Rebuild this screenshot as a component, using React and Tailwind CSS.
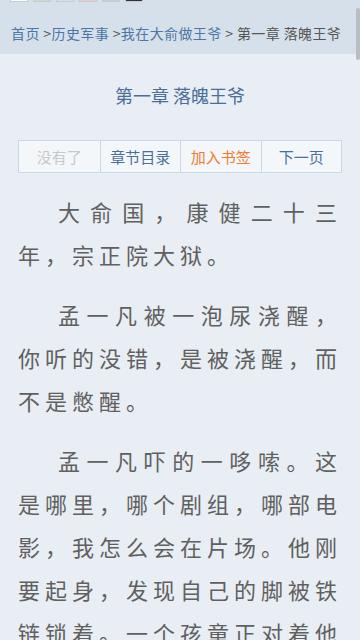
import React from 'react';

const swatches = ['bg-white', 'bg-[#c9dcc4]', 'bg-[#d9dfe3]', 'bg-[#ebcaca]', 'bg-[#cbcbcb]', 'bg-[#333333]'];

const paragraphs = [
  '大俞国，康健二十三年，宗正院大狱。',
  '孟一凡被一泡尿浇醒，你听的没错，是被浇醒，而不是憋醒。',
  '孟一凡吓的一哆嗦。这是哪里，哪个剧组，哪部电影，我怎么会在片场。他刚要起身，发现自己的脚被铁链锁着。一个孩童正对着他撒尿。',
];

export default function App() {
  return (
    <div
      className="relative h-[640px] w-[360px] overflow-hidden bg-[#e8eef3]"
      style={{ fontFamily: '"Noto Sans CJK SC", "Noto Sans", sans-serif' }}
    >
      {/* header band, scrolled a little so the tool row is cut off */}
      <div className="flex h-[54px] flex-col bg-[#d6e0ea]">
        <div className="-mt-[18px] flex h-[20px] items-start justify-between pl-[10px] pr-[22px]">
          <div className="flex gap-[5px]">
            {swatches.map((c, i) => (
              <div key={i} className={`h-[20px] w-[18px] border border-[#c4ccd2] ${c}`} />
            ))}
          </div>
          <div className="text-[14px] leading-[20px] tracking-[2px] text-[#4a78a8]">繁體 设置 字体 大 中 小</div>
        </div>
        <div className="mt-[21px] whitespace-nowrap pl-[11px] text-[14px] leading-[20px] tracking-[0.4px] text-[#555]">
          <span className="text-[#4a77a6]">首页</span> &gt;<span className="text-[#4a77a6]">历史军事</span> &gt;
          <span className="text-[#4a77a6]">我在大俞做王爷</span> &gt; 第一章 落魄王爷
        </div>
      </div>

      <h1 className="mt-[28px] text-center text-[18px] leading-[26px] text-[#4a6f98]">第一章 落魄王爷</h1>

      <div className="mx-[18px] mt-[32px] grid grid-cols-4 border border-[#cbd8e5] bg-[#f4f7fa] text-[15px] leading-[31px]">
        <div className="text-center text-[#c6c8ca]">没有了</div>
        <div className="border-l border-[#cbd8e5] text-center text-[#4a6f98]">章节目录</div>
        <div className="border-l border-[#cbd8e5] text-center text-[#f07b2c]">加入书签</div>
        <div className="border-l border-[#cbd8e5] text-center text-[#4a6f98]">下一页</div>
      </div>

      <div className="mt-[17px] px-[18px] text-[22px] leading-[43px] tracking-[5px] text-[#606060]">
        {paragraphs.map((p, i) => (
          <p key={i} className="mb-[17px] text-justify indent-[40px]">
            {p}
          </p>
        ))}
      </div>

      {/* scrollbar */}
      <div className="absolute right-0 top-[8px] h-[52px] w-[4px] rounded-sm bg-[#b9bec3]" />
    </div>
  );
}
